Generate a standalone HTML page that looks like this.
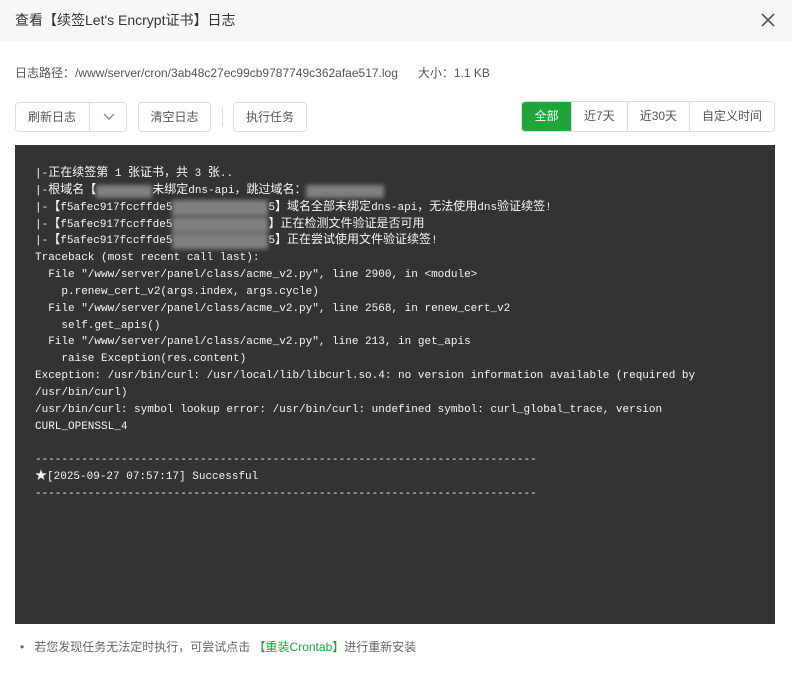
<!DOCTYPE html>
<html><head><meta charset="utf-8"><style>
*{margin:0;padding:0;box-sizing:border-box}
body{width:792px;height:676px;background:#fff;font-family:"Liberation Sans","Noto Sans CJK SC",sans-serif;position:relative;overflow:hidden;color:#333}
.hd{position:absolute;left:0;top:0;width:792px;height:41px;background:#f7f7f7;font-size:14px;line-height:40px;padding-left:15px;color:#333}
.x{position:absolute;right:16px;top:12px;width:16px;height:16px}
.path{position:absolute;left:15px;top:64px;font-size:12px;color:#555}
.btn{position:absolute;top:102px;height:30px;border:1px solid #ddd;border-radius:4px;font-size:12px;line-height:28px;text-align:center;color:#555;background:#fff}
.seg{position:absolute;top:101px;left:521px;height:31px;border:1px solid #ddd;border-radius:4px;display:flex;font-size:12px;line-height:29px;overflow:hidden}
.seg div{padding:0 12px;border-left:1px solid #ddd;color:#555}
.seg div:first-child{border:0;background:#20a53a;color:#fff;width:49px;padding:0;text-align:center}
.log{position:absolute;left:15px;top:145px;width:760px;height:479px;background:#333;padding:21px 0 0 20px;font-family:"Liberation Mono","Noto Sans CJK SC",monospace;font-size:11px;line-height:16.85px;color:#f6f6f6;white-space:pre;overflow:hidden}
.log div{height:16.85px;line-height:16.85px}
.c{font-size:12px;font-family:"Noto Sans CJK SC",sans-serif;line-height:10px}
.bl{display:inline-block;background:#999;filter:blur(2px);height:13px;vertical-align:top;margin-top:2px;opacity:.75}
.ft{position:absolute;left:20px;top:638px;font-size:12px;color:#666}
.ft b{font-weight:normal;color:#20a53a}
</style></head><body>
<div class="hd">查看【续签Let's Encrypt证书】日志
<svg class="x" viewBox="0 0 16 16"><path d="M2 2L14 14M14 2L2 14" stroke="#555" stroke-width="1.6"/></svg></div>
<div class="path">日志路径：/www/server/cron/3ab48c27ec99cb9787749c362afae517.log&nbsp;&nbsp;&nbsp;&nbsp;&nbsp;&nbsp;大小：1.1 KB</div>
<div class="btn" style="left:15px;width:112px;text-align:left;padding-left:12px">刷新日志<span style="position:absolute;left:73px;top:0;height:28px;border-left:1px solid #ddd"></span><svg style="position:absolute;left:87px;top:10px" width="12" height="8" viewBox="0 0 12 8"><path d="M1 1L6 6L11 1" fill="none" stroke="#777" stroke-width="1.2"/></svg></div>
<div class="btn" style="left:138px;width:73px">清空日志</div>
<div style="position:absolute;left:222px;top:108px;height:18px;border-left:1px solid #ddd"></div>
<div class="btn" style="left:233px;width:74px">执行任务</div>
<div class="seg"><div>全部</div><div>近7天</div><div>近30天</div><div>自定义时间</div></div>
<div class="log"><div>|-<span class="c">正在续签第</span> 1 <span class="c">张证书，共</span> 3 <span class="c">张</span>..</div><div>|-<span class="c">根域名【</span><span class="bl" style="width:56px"></span><span class="c">未绑定</span>dns-api<span class="c">，跳过域名：</span><span class="bl" style="width:78px"></span></div><div>|-<span class="c">【</span>f5afec917fccffde5<span class="bl" style="width:96px;height:16px;margin-top:0"></span>5<span class="c">】域名全部未绑定</span>dns-api<span class="c">，无法使用</span>dns<span class="c">验证续签</span>!</div><div>|-<span class="c">【</span>f5afec917fccffde5<span class="bl" style="width:96px;height:16px;margin-top:0"></span><span class="c">】正在检测文件验证是否可用</span></div><div>|-<span class="c">【</span>f5afec917fccffde5<span class="bl" style="width:96px;height:16px;margin-top:0"></span>5<span class="c">】正在尝试使用文件验证续签</span>!</div><div>Traceback (most recent call last):</div><div>  File "/www/server/panel/class/acme_v2.py", line 2900, in &lt;module&gt;</div><div>    p.renew_cert_v2(args.index, args.cycle)</div><div>  File "/www/server/panel/class/acme_v2.py", line 2568, in renew_cert_v2</div><div>    self.get_apis()</div><div>  File "/www/server/panel/class/acme_v2.py", line 213, in get_apis</div><div>    raise Exception(res.content)</div><div>Exception: /usr/bin/curl: /usr/local/lib/libcurl.so.4: no version information available (required by</div><div>/usr/bin/curl)</div><div>/usr/bin/curl: symbol lookup error: /usr/bin/curl: undefined symbol: curl_global_trace, version</div><div>CURL_OPENSSL_4</div><div></div><div>----------------------------------------------------------------------------</div><div><span class="c">★</span>[2025-09-27 07:57:17] Successful</div><div>----------------------------------------------------------------------------</div></div>
<div class="ft">•&nbsp;&nbsp;&nbsp;若您发现任务无法定时执行，可尝试点击 <b>【重装Crontab】</b>进行重新安装</div>
</body></html>
